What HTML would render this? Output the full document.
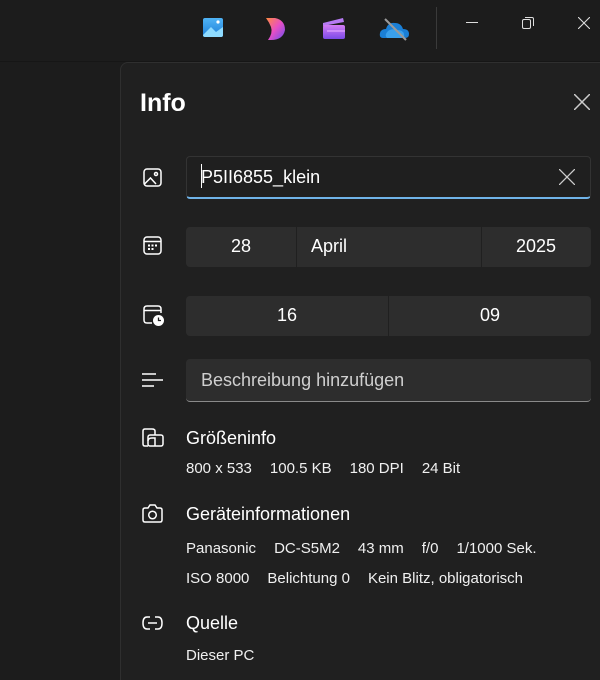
<!DOCTYPE html>
<html style="width:600px;height:680px;overflow:hidden"><head><meta charset="utf-8"><style>
*{margin:0;padding:0;box-sizing:border-box}
body{width:600px;height:680px;background:#1c1c1c;font-family:"Segoe UI","Liberation Sans",sans-serif;color:#fff;position:relative;overflow:hidden}
.a{position:absolute}
.panel{left:120px;top:62px;width:500px;height:630px;background:#202020;border:1px solid #2f2f2f;border-radius:8px}
.f{position:absolute;background:#2d2d2d;border-radius:4px;font-size:18px;display:flex;align-items:center}
.t{position:absolute;white-space:nowrap}
.h{font-size:18px}
.s{font-size:15px;color:#f0f0f0}
.s span{margin-right:18px}
svg{position:absolute}
</style></head><body>
<svg class="a" style="left:203px;top:17px" width="20" height="22" viewBox="0 0 20 22"><defs><linearGradient id="g1" x1="0" y1="0" x2="0" y2="1"><stop offset="0" stop-color="#4fb3f5"/><stop offset="1" stop-color="#1e7fd8"/></linearGradient></defs><rect x="0" y="1" width="20" height="19" rx="2" fill="url(#g1)"/><path d="M0 18 L8 10 L13 15 L20 10 V18 Q20 20 18 20 H2 Q0 20 0 18Z" fill="#8fdcff"/><circle cx="15" cy="5" r="1.6" fill="#fff"/></svg>
<svg class="a" style="left:265px;top:17px" width="22" height="24" viewBox="0 0 22 24"><defs><linearGradient id="g2" x1="0" y1="0" x2="1" y2="1"><stop offset="0" stop-color="#ff8a3d"/><stop offset=".5" stop-color="#e84fc4"/><stop offset="1" stop-color="#6a4ff0"/></linearGradient></defs><path d="M1 1 H10 Q20 3 20 13 Q18 23 6 23 H3 Q8 16 6 10 Q4 5 1 1Z" fill="url(#g2)"/></svg>
<svg class="a" style="left:322px;top:17px" width="24" height="23" viewBox="0 0 24 23"><defs><linearGradient id="g3" x1="0" y1="0" x2="0" y2="1"><stop offset="0" stop-color="#d37cf5"/><stop offset="1" stop-color="#7b4ae6"/></linearGradient></defs><path d="M1 6 L21 1 L22 5 L1 9Z" fill="#b67af2"/><rect x="1" y="8" width="22" height="14" rx="2" fill="url(#g3)"/><rect x="5" y="13" width="18" height="2" fill="#e1a6ff" opacity=".6"/></svg>
<svg class="a" style="left:379px;top:17px" width="31" height="24" viewBox="0 0 31 24"><path d="M4 21 Q0 21 1 16 Q2 12 7 12 Q9 5 16 6 Q22 6 24 12 Q30 12 30 17 Q30 21 26 21Z" fill="#1a7fd6"/><path d="M8 21 Q5 18 9 14 Q13 11 18 13 Q24 13 25 17 Q26 21 22 21Z" fill="#3aa0ec"/><line x1="6" y1="2" x2="27" y2="23" stroke="#9a9a9a" stroke-width="2"/></svg>
<div class="a" style="left:436px;top:7px;width:1px;height:42px;background:#3a3a3a"></div>
<div class="a" style="left:466px;top:22px;width:12px;height:1px;background:#ddd"></div>
<svg class="a" style="left:522px;top:17px" width="12" height="12" viewBox="0 0 12 12" fill="none" stroke="#ddd"><rect x="0.5" y="2.5" width="8" height="9" rx="1.5"/><path d="M3 .5 H10 Q11.5 .5 11.5 2 V9"/></svg>
<svg class="a" style="left:578px;top:17px" width="12" height="12" viewBox="0 0 12 12" stroke="#ddd" stroke-width="1.1"><path d="M0 0 L12 12 M12 0 L0 12"/></svg>
<div class="a" style="left:0;top:61px;width:600px;height:1px;background:#161616"></div>

<div class="a panel"></div>
<div class="t" style="left:140px;top:89px;font-size:25px;font-weight:600">Info</div>
<svg class="a" style="left:574px;top:94px" width="16" height="16" viewBox="0 0 16 16" stroke="#ccc" stroke-width="1.5"><path d="M0 0 L16 16 M16 0 L0 16"/></svg>

<svg class="a" style="left:143px;top:168px" width="19" height="19" viewBox="0 0 19 19" fill="none" stroke="#fff" stroke-width="1.5"><rect x="1" y="1" width="17" height="17" rx="3"/><path d="M1.5 16 L7.5 10 L13 16"/><circle cx="13" cy="6" r="1.5"/></svg>
<svg class="a" style="left:143px;top:236px" width="19" height="19" viewBox="0 0 19 19" fill="none" stroke="#fff" stroke-width="1.5"><rect x="1" y="1" width="17" height="17" rx="3"/><path d="M1 5.5 H18"/><g fill="#fff" stroke="none"><rect x="5" y="8.5" width="2" height="2"/><rect x="8.5" y="8.5" width="2" height="2"/><rect x="12" y="8.5" width="2" height="2"/><rect x="5" y="12" width="2" height="2"/><rect x="8.5" y="12" width="2" height="2"/></g></svg>
<svg class="a" style="left:143px;top:305px" width="22" height="22" viewBox="0 0 22 22" fill="none" stroke="#fff" stroke-width="1.5"><path d="M9 18 H4 Q1 18 1 15 V4 Q1 1 4 1 H15 Q18 1 18 4 V8"/><path d="M1 5.5 H18"/><circle cx="15.5" cy="15.5" r="5.5" fill="#fff" stroke="none"/><path d="M15.5 12.5 V15.5 H18" stroke="#202020" stroke-width="1.3"/></svg>
<svg class="a" style="left:142px;top:372px" width="21" height="16" viewBox="0 0 21 16" stroke="#fff" stroke-width="1.5"><path d="M0 2 H14 M0 8 H21 M0 14 H12"/></svg>
<svg class="a" style="left:142px;top:428px" width="22" height="19" viewBox="0 0 22 19" fill="none" stroke="#fff" stroke-width="1.5"><path d="M6 18 H3 Q1 18 1 16 V3 Q1 1 3 1 H10 Q13 1 13 3 V7"/><rect x="6" y="7" width="15" height="11" rx="2"/><path d="M6 13 Q6 10 10 10 H13 V18"/></svg>
<svg class="a" style="left:142px;top:504px" width="21" height="19" viewBox="0 0 21 19" fill="none" stroke="#fff" stroke-width="1.5"><path d="M3 4 H6 L8 1 H13 L15 4 H18 Q20 4 20 6 V16 Q20 18 18 18 H3 Q1 18 1 16 V6 Q1 4 3 4Z"/><circle cx="10.5" cy="11" r="3.8"/></svg>
<svg class="a" style="left:142px;top:616px" width="21" height="14" viewBox="0 0 21 14" fill="none" stroke="#fff" stroke-width="1.5"><path d="M8 1 H5 Q1 1 1 7 Q1 13 5 13 H8 M13 1 H16 Q20 1 20 7 Q20 13 16 13 H13 M6 7 H15"/></svg>

<div class="f" style="left:186px;top:156px;width:405px;height:43px;background:#1f1f1f;border:1px solid #333;border-bottom:2px solid #6fb3e8;padding-left:14px">P5II6855_klein</div>
<div class="a" style="left:201px;top:164px;width:1px;height:24px;background:#fff"></div>
<svg class="a" style="left:559px;top:169px" width="16" height="16" viewBox="0 0 16 16" stroke="#ccc" stroke-width="1.3"><path d="M0 0 L16 16 M16 0 L0 16"/></svg>

<div class="f" style="left:186px;top:227px;width:405px;height:40px"></div>
<div class="a" style="left:296px;top:227px;width:1px;height:40px;background:#202020"></div>
<div class="a" style="left:481px;top:227px;width:1px;height:40px;background:#202020"></div>
<div class="t" style="left:186px;top:236px;width:110px;text-align:center;font-size:18px">28</div>
<div class="t" style="left:311px;top:236px;font-size:18px">April</div>
<div class="t" style="left:482px;top:236px;width:108px;text-align:center;font-size:18px">2025</div>

<div class="f" style="left:186px;top:296px;width:405px;height:40px"></div>
<div class="a" style="left:388px;top:296px;width:1px;height:40px;background:#202020"></div>
<div class="t" style="left:186px;top:305px;width:202px;text-align:center;font-size:18px">16</div>
<div class="t" style="left:389px;top:305px;width:202px;text-align:center;font-size:18px">09</div>

<div class="f" style="left:186px;top:359px;width:405px;height:43px;padding-left:15px;color:#cfcfcf;border-bottom:1px solid #8a8a8a">Beschreibung hinzufügen</div>

<div class="t h" style="left:186px;top:428px">Größeninfo</div>
<div class="t s" style="left:186px;top:460px"><span>800 x 533</span><span>100.5 KB</span><span>180 DPI</span><span>24 Bit</span></div>
<div class="t h" style="left:186px;top:504px">Geräteinformationen</div>
<div class="t s" style="left:186px;top:540px"><span>Panasonic</span><span>DC-S5M2</span><span>43 mm</span><span>f/0</span><span>1/1000 Sek.</span></div>
<div class="t s" style="left:186px;top:570px"><span>ISO 8000</span><span>Belichtung 0</span><span>Kein Blitz, obligatorisch</span></div>
<div class="t h" style="left:186px;top:613px">Quelle</div>
<div class="t s" style="left:186px;top:647px">Dieser PC</div>
</body></html>
